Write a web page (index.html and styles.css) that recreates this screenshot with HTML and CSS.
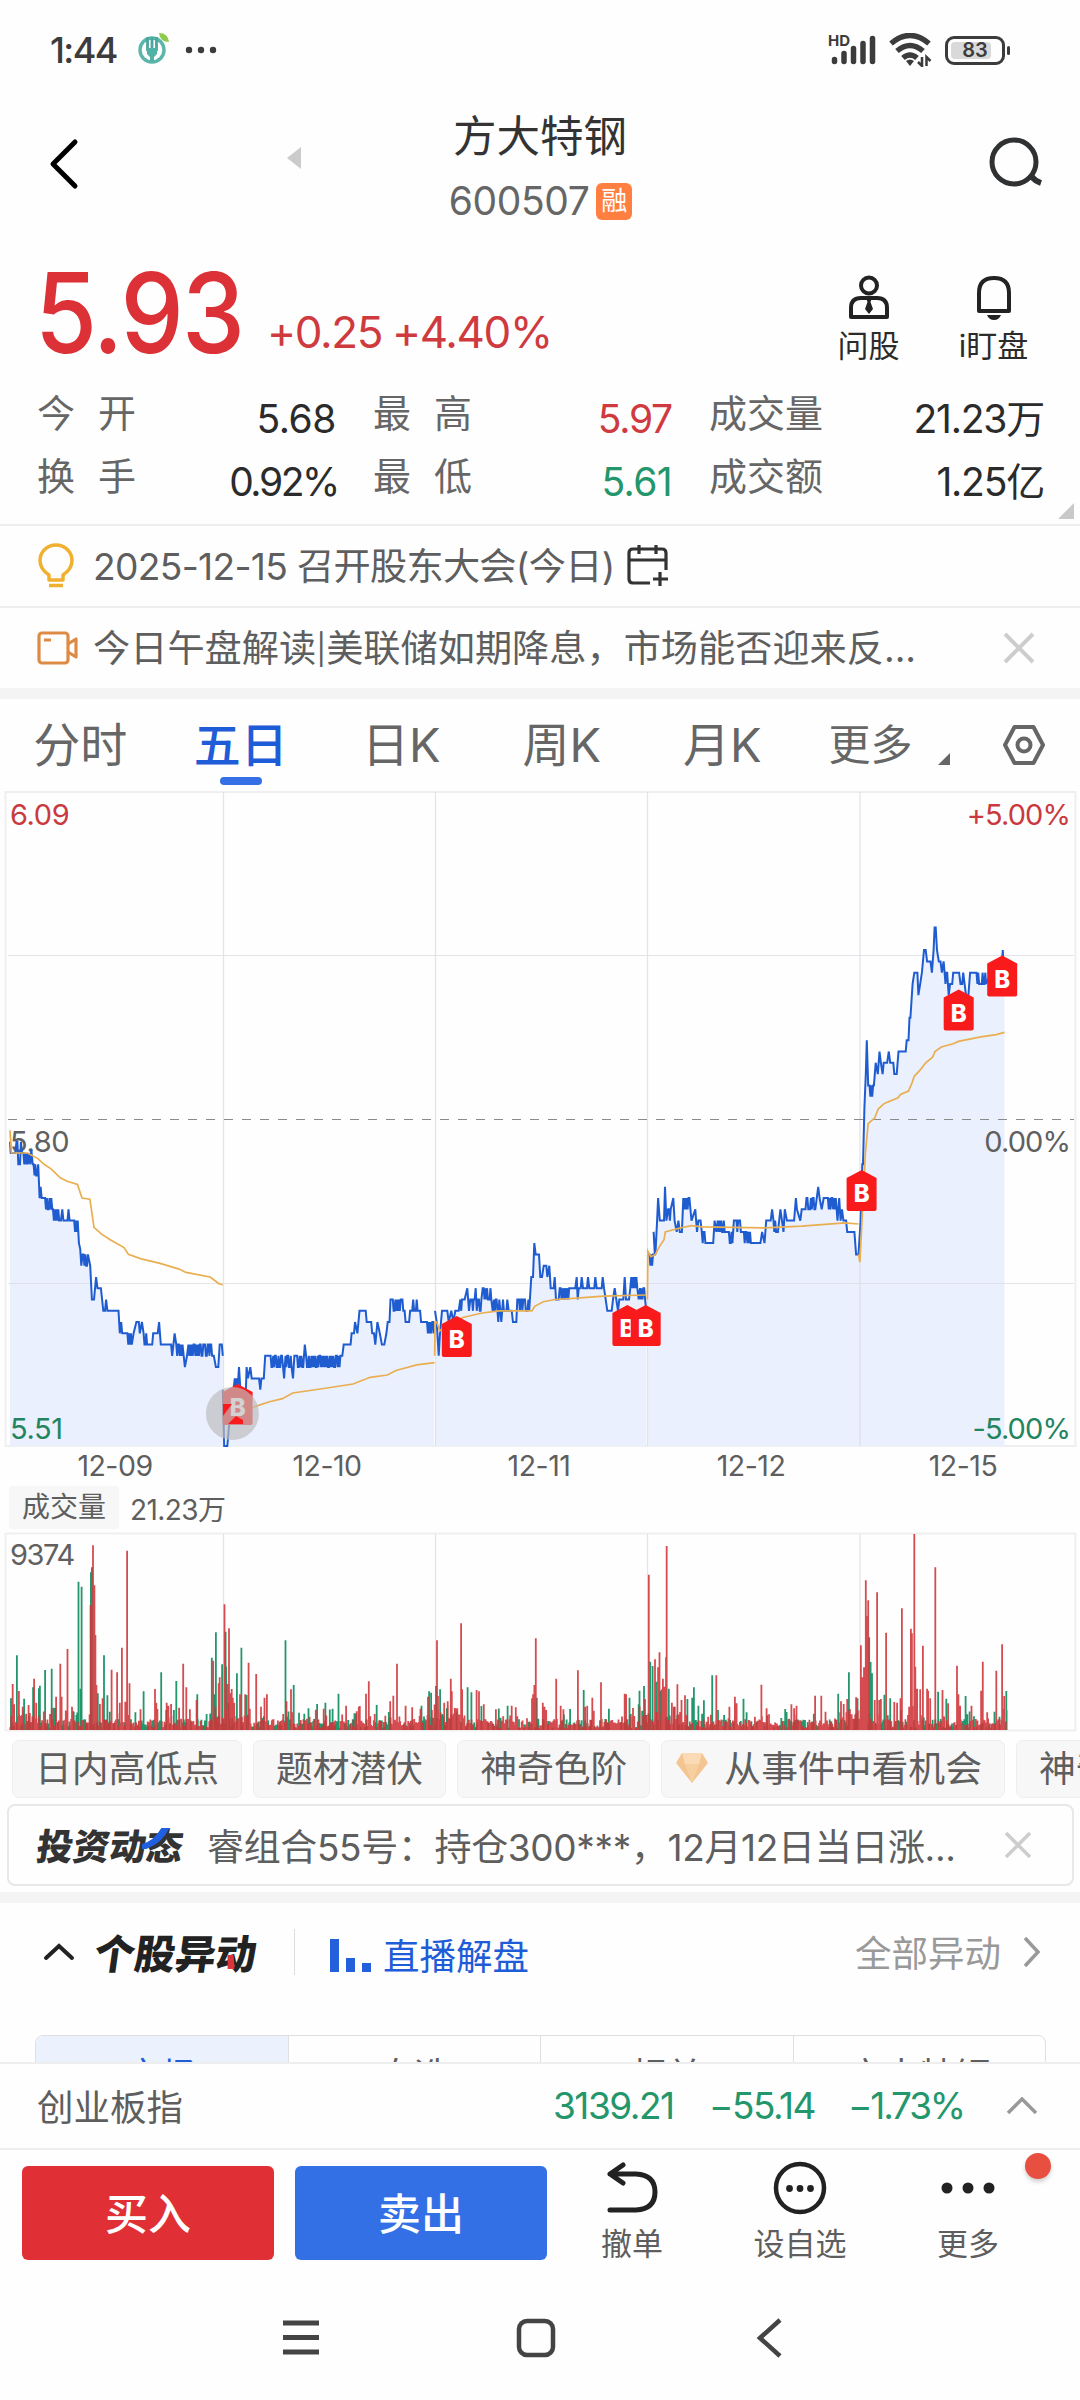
FILE: index.html
```html
<!DOCTYPE html>
<html lang="zh-CN">
<head>
<meta charset="UTF-8">
<meta name="viewport" content="width=device-width, initial-scale=1.0">
<title>方大特钢 600507</title>
<link rel="stylesheet" href="styles.css">
</head>
<body>

<!-- Status bar -->
<div class="status-bar">
    <span class="time">1:44</span>
    <svg class="app-icon" width="36" height="36" viewBox="0 0 36 36">
        <circle cx="17" cy="18" r="12" fill="none" stroke="#5bb5ab" stroke-width="3.4"/>
        <path d="M12.500 5v14M17 5v13M21.500 5v14" stroke="#4aa59c" stroke-width="2.800"/>
        <path d="M12 16h10v6l-3 3v5h-4v-5l-3-3z" fill="#4fb3a8"/>
        <path d="M24 1q9 0 10 9q-9 0-10-9z" fill="#8ecb4d"/>
    </svg>
    <svg width="32" height="8" viewBox="0 0 32 8" fill="#3c3c3c">
        <circle cx="4" cy="4" r="3.200"/><circle cx="16" cy="4" r="3.200"/><circle cx="28" cy="4" r="3.200"/>
    </svg>
    <div class="status-right">
        <span class="hd">HD</span>
        <svg width="46" height="30" viewBox="0 0 46 30" stroke="#3c3c3c" stroke-width="5.500" stroke-linecap="round">
            <path d="M3.500 26.500v-2M13 26.500v-8M22.500 26.500v-13M32 26.500v-18M41.500 26.500v-23"/>
        </svg>
        <svg width="44" height="34" viewBox="0 0 44 34" fill="none" stroke="#3c3c3c" stroke-width="5.500">
            <path d="M2 10.500q19-16 38 0M8 18q13-11 26 0M14 25q7-6 14 0"/>
            <path d="M17 28q4-3 8 0l-4 5z" fill="#3c3c3c" stroke="none"/>
            <path d="M33 24v9l-4-4M37.500 33v-9l4 4" stroke-width="2.500"/>
        </svg>
        <div class="battery"><i></i><span>83</span></div>
    </div>
</div>

<!-- Title bar -->
<header class="title-bar">
    <svg class="back" width="30" height="52" viewBox="0 0 30 52" fill="none" stroke="#000" stroke-width="5" stroke-linecap="round" stroke-linejoin="round">
        <path d="M26 4L4 26l22 22"/>
    </svg>
    <svg class="prev" width="14" height="22" viewBox="0 0 14 22"><path d="M14 0v22L0 11z" fill="#cbcbcb"/></svg>
    <div class="title">
        <h1>方大特钢</h1>
        <div class="code">600507<b>融</b></div>
    </div>
    <svg class="search" width="56" height="56" viewBox="0 0 56 56" fill="none" stroke="#2f3133" stroke-width="5">
        <circle cx="26" cy="26" r="22"/><path d="M43 40q4 5 10 7" stroke-width="6"/>
    </svg>
</header>

<!-- Quote -->
<section class="quote">
    <div class="price-row">
        <span class="price">5.93</span>
        <span class="change">+0.25 +4.40%</span>
        <div class="tool">
            <svg width="42" height="46" viewBox="0 0 42 46" fill="none" stroke="#222" stroke-width="4">
                <circle cx="21" cy="10.500" r="8"/>
                <path d="M3 42V33q0-10 10-10h16q10 0 10 10v9z" stroke-linejoin="round"/>
                <path d="M18 23h6l-1.500 4 2.500 7-4 5-4-5 2.500-7z" fill="#222" stroke="none"/>
            </svg>
            <span>问股</span>
        </div>
        <div class="tool">
            <svg width="42" height="46" viewBox="0 0 42 46" fill="none" stroke="#222" stroke-width="4">
                <path d="M6 36V18Q6 3 21 3t15 15v18z" stroke-linejoin="round"/>
                <path d="M14 40h14q-2 5-7 5t-7-5z" fill="#222" stroke="none"/>
            </svg>
            <span>i盯盘</span>
        </div>
    </div>
    <div class="stats">
        <div><label>今<i></i>开</label><span class="open">5.68</span></div>
        <div><label>最<i></i>高</label><span class="up">5.97</span></div>
        <div><label>成交量</label><span>21.23万</span></div>
        <div><label>换<i></i>手</label><span class="rate">0.92%</span></div>
        <div><label>最<i></i>低</label><span class="down">5.61</span></div>
        <div><label>成交额</label><span>1.25亿</span></div>
    </div>
    <svg class="expand" width="16" height="16" viewBox="0 0 16 16"><path d="M16 0v16H0z" fill="#c9c9c9"/></svg>
</section>

<!-- Notices -->
<div class="notice">
    <svg width="38" height="46" viewBox="0 0 38 46" fill="none" stroke="#efb12f" stroke-width="3.500">
        <path d="M12 37v-5Q3 26 3 17.500a16 15.500 0 0 1 32 0Q35 26 26 32v5z" stroke-linejoin="round"/>
        <path d="M12 42.500h14"/>
    </svg>
    <span class="notice-text date">2025-12-15 召开股东大会(今日)</span>
    <svg width="42" height="42" viewBox="0 0 42 42" fill="none" stroke="#333" stroke-width="3.200">
        <path d="M23 38H6q-4 0-4-4V8q0-4 4-4h29q4 0 4 4v17M2 15h37M12 0v9M29 0v9M33 27v14M26 34h15"/>
    </svg>
</div>
<div class="notice">
    <svg width="42" height="34" viewBox="0 0 42 34" fill="none" stroke="#dd8a45" stroke-width="3.200" stroke-linejoin="round">
        <rect x="2" y="2" width="29" height="30" rx="3"/><path d="M31 13l8-5v18l-8-5M7 9h7"/>
    </svg>
    <span class="notice-text">今日午盘解读<small>|</small>美联储如期降息，市场能否迎来反...</span>
    <svg class="close" width="32" height="32" viewBox="0 0 32 32" stroke="#cdcdcd" stroke-width="4"><path d="M2 2l28 28M30 2L2 30"/></svg>
</div>
<div class="divider"></div>

<!-- Period tabs -->
<nav class="tabs">
    <a>分时</a>
    <a class="active">五日</a>
    <a>日K</a>
    <a>周K</a>
    <a>月K</a>
    <a class="more">更多<svg width="12" height="12" viewBox="0 0 12 12"><path d="M12 0v12H0z" fill="#666"/></svg></a>
    <svg class="gear" width="44" height="42" viewBox="0 0 44 42" fill="none" stroke="#666" stroke-width="4">
        <path d="M12.500 3h19L41 21l-9.500 18h-19L3 21z" stroke-linejoin="round"/><circle cx="22" cy="21" r="6.500"/>
    </svg>
</nav>

<!-- Price chart, filled in by chart.js -->
<div class="chart">
    <svg id="price" width="1080" height="657" viewBox="0 791 1080 657">
        <rect class="frame" x="5.500" y="792" width="1070" height="654"/>
        <path class="area" id="area"/>
        <path class="grid" d="M223.500 792v654M435.500 792v654M647.500 792v654M860 792v654M8 955.500h1066M8 1283.500h1066"/>
        <path class="mid" d="M8 1119.500h1066"/>
        <g class="axis">
            <text x="10" y="825" class="up">6.09</text>
            <text x="10" y="1152">5.80</text>
            <text x="10" y="1439" class="down">5.51</text>
            <text x="1070" y="825" class="up end">+5.00%</text>
            <text x="1070" y="1152" class="end">0.00%</text>
            <text x="1070" y="1439" class="down end">-5.00%</text>
        </g>
        <path class="line" id="line"/>
        <path class="avg" id="avg"/>
        <g id="markers"></g>
        <circle cx="232.400" cy="1413.500" r="26.500" fill="#bdbdbd" fill-opacity=".68"/>
        <path d="M223 1404h9l-9 12zM228 1424l8-8 7 4v4z" fill="#f91b1b"/>
    </svg>
    <div class="dates"><span>12-09</span><span>12-10</span><span>12-11</span><span>12-12</span><span>12-15</span></div>
</div>

<!-- Volume -->
<div class="volume">
    <div class="volume-head"><b>成交量</b><span>21.23万</span></div>
    <svg id="volume" width="1080" height="200" viewBox="0 1532 1080 200">
        <rect class="frame" x="5.500" y="1533.500" width="1070" height="197"/>
        <path class="grid" d="M223.500 1534v196M435.500 1534v196M647.500 1534v196M860 1534v196"/>
        <g class="axis"><text x="10" y="1565" class="max">9374</text></g>
        <path id="green" fill="#23966b"/>
        <path id="red" fill="#cf3338" fill-opacity=".88"/>
    </svg>
</div>

<!-- Indicator chips -->
<div class="chips">
    <span>日内高低点</span>
    <span>题材潜伏</span>
    <span>神奇色阶</span>
    <span class="gem"><svg width="34" height="32" viewBox="0 0 34 32"><path d="M7 1h20l6 10-16 20L1 11z" fill="#f4c591"/><path d="M7 1h20l-3 11H10z" fill="#fadbb6"/><path d="M10 12h14l-7 19z" fill="#f7d0a2"/></svg>从事件中看机会</span>
    <span>神奇九转</span>
</div>

<!-- News card -->
<div class="news">
    <div class="brand">投资动态<svg width="26" height="22" viewBox="0 0 26 22"><path d="M17 0h8q-5 15-20 21H0v-5q11-3 17-16z" fill="#1f5fe0"/></svg></div>
    <span class="news-text">睿组合55号：持仓300***，12月12日当日涨...</span>
    <svg width="26" height="26" viewBox="0 0 26 26" stroke="#cdcdcd" stroke-width="3.500"><path d="M1 1l24 24M25 1L1 25"/></svg>
</div>
<div class="divider"></div>

<!-- Stock moves -->
<section class="moves">
    <div class="moves-head">
        <svg width="32" height="18" viewBox="0 0 32 18" fill="none" stroke="#222" stroke-width="4" stroke-linecap="round"><path d="M3 15L16 3l13 12"/></svg>
        <div class="brand big">个股异动<svg width="10" height="14" viewBox="0 0 10 14"><path d="M1 0h6l3 14H3z" fill="#db3439"/></svg></div>
        <i class="sep"></i>
        <svg class="bars" width="42" height="34" viewBox="0 0 42 34" fill="#2460dc"><path d="M0 0h9v33H0zM16 19h9v14h-9zM32 24h9v9h-9z"/></svg>
        <span class="live">直播解盘</span>
        <span class="all">全部异动</span>
        <svg width="18" height="32" viewBox="0 0 18 32" fill="none" stroke="#999" stroke-width="3.500"><path d="M2 2l13 14L2 30"/></svg>
    </div>
    <div class="segments"><span class="on">市场</span><span>自选</span><span>相关</span><span>方大特钢</span></div>
</section>

<!-- Index strip -->
<div class="index-bar">
    <span class="name">创业板指</span>
    <span class="n1">3139.21</span><span class="n2">−55.14</span><span class="n3">−1.73%</span>
    <svg width="32" height="18" viewBox="0 0 32 18" fill="none" stroke="#999" stroke-width="3.500"><path d="M2 16L16 2l14 14"/></svg>
</div>

<!-- Trade bar -->
<div class="trade-bar">
    <button class="buy">买入</button>
    <button class="sell">卖出</button>
    <div class="action">
        <svg width="54" height="54" viewBox="0 0 54 54" fill="none" stroke="#222" stroke-width="5" stroke-linecap="round" stroke-linejoin="round"><path d="M5 49h26q19-1 19-18T31 13H5M18 4L5 13l13 9"/></svg>
        <span>撤单</span>
    </div>
    <div class="action">
        <svg width="54" height="54" viewBox="0 0 54 54" fill="#222"><circle cx="27" cy="27" r="24" fill="none" stroke="#222" stroke-width="4.500"/><circle cx="16.500" cy="27.500" r="3.400"/><circle cx="27" cy="27.500" r="3.400"/><circle cx="37.500" cy="27.500" r="3.400"/></svg>
        <span>设自选</span>
    </div>
    <div class="action">
        <svg width="54" height="54" viewBox="0 0 54 54" fill="#222"><circle cx="6" cy="27" r="5.500"/><circle cx="27" cy="27" r="5.500"/><circle cx="48" cy="27" r="5.500"/></svg>
        <span>更多</span>
        <i class="dot"></i>
    </div>
</div>

<!-- System navigation -->
<div class="sys-nav">
    <svg width="38" height="40" viewBox="0 0 38 40" stroke="#444" stroke-width="5"><path d="M1 5h36M1 19.500h36M1 34h36"/></svg>
    <svg width="40" height="40" viewBox="0 0 40 40" fill="none" stroke="#444" stroke-width="4.500"><rect x="3" y="3" width="34" height="34" rx="8"/></svg>
    <svg width="26" height="40" viewBox="0 0 26 40" fill="none" stroke="#444" stroke-width="4.500"><path d="M24 2L4 20l20 18"/></svg>
</div>

<script src="chart.js"></script>
</body>
</html>
```
FILE: styles.css
```css
* {
    box-sizing: border-box;
}

body {
    margin: 0;
    width: 1080px;
    height: 2400px;
    overflow: hidden;
    background: #fefefe;
    color: #333;
    font-family: Inter, "Noto Sans CJK SC", sans-serif;
    font-size: 37px;
    letter-spacing: 0;
}

svg {
    display: block;
    flex: none;
}

.up { color: #cf3a3e; fill: #cf3a3e; }
.down { color: #23966b; fill: #23966b; }

/* status bar */
.status-bar {
    height: 100px;
    padding: 0 75px 0 50px;
    display: flex;
    align-items: center;
    color: #3c3c3c;
}

.time {
    font-size: 36px;
    font-weight: 500;
    letter-spacing: -1.6px;
    width: 85px;
}

.app-icon { margin-right: 14px; }

.status-right {
    margin-left: auto;
    display: flex;
    align-items: center;
}

.status-right > svg { margin-right: 12px; }

.hd {
    font-size: 15px;
    font-weight: 700;
    margin: -20px -19px 0 0;
    z-index: 1;
}

.battery {
    position: relative;
    width: 60px;
    height: 29px;
    border: 3px solid #3c3c3c;
    border-radius: 9px;
    font-size: 20px;
    font-weight: 600;
    line-height: 23px;
    text-align: center;
}

.battery i {
    position: absolute;
    left: 3px;
    top: 3px;
    width: 40px;
    height: 17px;
    border-radius: 4px;
    background: #d9d9d9;
}

.battery span { position: relative; }

.battery::after {
    content: "";
    position: absolute;
    right: -8px;
    top: 7px;
    width: 3px;
    height: 9px;
    border-radius: 2px;
    background: #3c3c3c;
}

/* title bar */
.title-bar {
    height: 140px;
    padding: 0 36px 0 49px;
    display: flex;
    align-items: flex-start;
}

.back { margin-top: 38px; }
.prev { margin: 47px 0 0 208px; }

.title {
    width: 240px;
    margin: 10px auto 0 119px;
    text-align: center;
}

h1 {
    margin: 0;
    font-size: 43.5px;
    font-weight: 400;
    line-height: 52px;
}

.code {
    display: flex;
    align-items: center;
    justify-content: center;
    margin-top: 13px;
    padding-left: 1px;
    font-size: 39px;
    line-height: 52px;
    color: #666;
    letter-spacing: -.4px;
}

.code b {
    width: 36px;
    height: 37px;
    margin-left: 7px;
    border-radius: 6px;
    background: #ff7f41;
    color: #fff;
    font-size: 26px;
    font-weight: 400;
    line-height: 36px;
    letter-spacing: 0;
}

.search { margin-top: 36px; }

/* quote */
.quote {
    position: relative;
    height: 286px;
    border-bottom: 2px solid #eeeeee;
}

.price-row {
    height: 147px;
    padding-left: 35px;
    display: flex;
}

.price {
    width: 232px;
    font-size: 111px;
    font-weight: 500;
    line-height: 146px;
    letter-spacing: -2px;
    color: #dc3237;
    transform: scaleX(.905);
    transform-origin: left;
}

.change {
    width: 531px;
    font-size: 44px;
    line-height: 184px;
    letter-spacing: -1.4px;
    word-spacing: -1px;
    color: #cf3a3e;
}

.tool {
    width: 125px;
    padding-top: 35px;
    display: flex;
    flex-direction: column;
    align-items: center;
    font-size: 31px;
    line-height: 50px;
    color: #2b2b2b;
}

.price-row .tool:nth-of-type(1) { margin-left: 8px; }

.stats {
    display: grid;
    grid-template-columns: 299px 299px 335px;
    column-gap: 37px;
    padding: 0 0 0 37px;
}

.stats div {
    height: 63px;
    display: flex;
    justify-content: space-between;
    color: #2b2b2b;
}

.stats label {
    color: #666;
    font-size: 38px;
    line-height: 52px;
}

.stats label i {
    display: inline-block;
    width: 23px;
}

.stats span {
    font-size: 39px;
    line-height: 63px;
    letter-spacing: -1.2px;
}

.stats .open { letter-spacing: -.4px; }
.stats .rate { letter-spacing: -2.4px; margin-right: -2px; }
.stats .up { color: #cf3a3e; }
.stats .down { color: #23966b; letter-spacing: -.6px; }

.expand {
    position: absolute;
    right: 6px;
    bottom: 5px;
}

/* notices */
.notice {
    height: 82px;
    padding: 0 45px 0 37px;
    display: flex;
    align-items: center;
    border-bottom: 2px solid #eeeeee;
    color: #5e5e5e;
}

.notice + .notice { border-bottom: 0; height: 80px; }

.notice-text {
    margin-left: 18px;
    margin-top: -4px;
    font-size: 37.2px;
    white-space: nowrap;
}

.notice-text small {
    font-size: 30px;
    vertical-align: 2px;
}

.notice + .notice .notice-text { margin-left: 14px; }
.date { letter-spacing: -.7px; margin-right: 12px; }
.close { margin-left: auto; }

.divider {
    height: 11px;
    background: #f4f4f4;
}

/* period tabs */
.tabs {
    height: 92px;
    display: flex;
    align-items: center;
    font-size: 47px;
    color: #666;
}

.tabs a {
    position: relative;
    width: 160.5px;
    text-align: center;
    line-height: 90px;
}

.tabs .active { color: #1f5cd8; font-weight: 500; }

.tabs .active::after {
    content: "";
    position: absolute;
    left: 59px;
    bottom: 5px;
    width: 42px;
    height: 8px;
    border-radius: 4px;
    background: #356fe6;
}

.tabs .more {
    display: flex;
    align-items: center;
    width: 174px;
    padding-left: 26px;
    font-size: 42px;
}

.more svg { margin: 28px 0 0 25px; }
.gear { margin-left: 25px; }

/* charts */
.frame { fill: none; stroke: #efefef; stroke-width: 2; }
.grid { fill: none; stroke: #dcdce4; stroke-width: 1.200; opacity: .8; }
.mid { fill: none; stroke: #8a8a8a; stroke-width: 1; stroke-dasharray: 9 9; }
.area { fill: #eaf0fe; }
.line { fill: none; stroke: #1f5cd0; stroke-width: 2; }
.avg { fill: none; stroke: #e9ae50; stroke-width: 1.700; }
.axis text { font-size: 29px; fill: #606060; letter-spacing: -.4px; }
.axis .up { fill: #c93a40; }
.axis .down { fill: #23855f; }
.axis .end { text-anchor: end; letter-spacing: -.9px; }
.axis .max { letter-spacing: -1.4px; }
.flag path { fill: #f91b1b; }
.flag text { fill: #fff; font-size: 24px; font-weight: 800; text-anchor: middle; }

.dates {
    display: flex;
    height: 36px;
    padding-left: 9px;
    font-size: 28.5px;
    line-height: 35px;
    letter-spacing: -.5px;
    color: #5e5e5e;
}

.dates span {
    width: 212px;
    text-align: center;
}

.volume-head {
    height: 48px;
    display: flex;
    align-items: center;
    padding: 0 0 1px 9px;
    font-size: 28px;
    color: #5e5e5e;
}

.volume-head b {
    width: 110px;
    height: 43px;
    margin-right: 11px;
    border-radius: 4px;
    background: #f7f7f7;
    font-weight: 400;
    line-height: 43px;
    text-align: center;
}

.volume-head span { letter-spacing: -.6px; }

/* chips */
.chips {
    display: flex;
    gap: 11px;
    margin-top: 8px;
    padding-left: 12px;
    height: 58px;
    overflow: hidden;
}

.chips span {
    flex: none;
    display: flex;
    align-items: center;
    padding: 0 22px;
    border: 1px solid #eeeeee;
    border-radius: 7px;
    background: #f7f7f7;
    font-size: 36.8px;
    line-height: 54px;
    color: #5e5e5e;
}

.chips .gem { padding-left: 13px; }
.gem svg { margin: -3px 15px 0 0; }

/* news card */
.news {
    height: 82px;
    margin: 6px 6px 6px 7px;
    padding: 0 41px 0 28px;
    display: flex;
    align-items: center;
    border: 2px solid #e8e8e8;
    border-radius: 8px;
    color: #5e5e5e;
}

.news-text {
    margin-left: 24px;
    font-size: 37px;
    letter-spacing: -.35px;
    white-space: nowrap;
}

.news > svg { margin-left: auto; }

.brand {
    position: relative;
    font-family: "Noto Sans CJK SC", sans-serif;
    font-size: 36.5px;
    font-weight: 900;
    line-height: 50px;
    color: #333;
    transform: skewX(-8deg);
    white-space: nowrap;
}

.brand svg {
    position: absolute;
    right: 15px;
    top: 8px;
}

/* stock moves */
.moves {
    height: 159px;
    overflow: hidden;
}

.moves-head {
    height: 132px;
    display: flex;
    align-items: center;
    padding: 0 39px 35px 43px;
}

.brand.big {
    margin-left: 20px;
    font-size: 40.5px;
    color: #222;
}

.brand.big svg { right: 20px; top: 28px; }

.sep {
    width: 1px;
    height: 46px;
    margin: 0 35px 0 37px;
    background: #dddddd;
}

.bars { margin-top: 9px; }

.live {
    margin: 6px 0 0 11px;
    font-size: 36.5px;
    color: #1f5cd8;
}

.all {
    margin: 0 22px 0 auto;
    font-size: 36.5px;
    color: #999;
}

.segments {
    display: flex;
    height: 82px;
    margin: 0 34px 0 35px;
    border: 1px solid #dfdfdf;
    border-radius: 8px;
    overflow: hidden;
    font-size: 36px;
    line-height: 80px;
    color: #5e5e5e;
}

.segments span {
    flex: 1 1 0;
    text-align: center;
    border-left: 1px solid #dfdfdf;
}

.segments .on {
    border-left: 0;
    background: #ebf1fd;
    color: #1f5cd8;
}

/* index strip */
.index-bar {
    height: 88px;
    padding: 0 42px 1px 37px;
    display: flex;
    align-items: center;
    border-top: 2px solid #eeeeee;
    border-bottom: 2px solid #eeeeee;
    background: #fefefe;
    letter-spacing: -1.5px;
    color: #23966b;
}

.index-bar .name {
    width: 516px;
    font-size: 36.5px;
    letter-spacing: 0;
    color: #5e5e5e;
}

.n1 { width: 156px; }
.n2 { width: 139px; }
.n3 { letter-spacing: -2.2px; }
.index-bar svg { margin-left: auto; }

/* trade bar */
.trade-bar {
    display: flex;
    height: 140px;
    padding-left: 22px;
}

.trade-bar button {
    width: 252px;
    height: 94px;
    margin: 16px 21px 0 0;
    padding: 0 0 4px;
    border: 0;
    border-radius: 6px;
    background: #e03036;
    color: #fff;
    font-family: inherit;
    font-size: 43px;
    font-weight: 500;
}

.trade-bar .sell { background: #3370e6; }

.action {
    position: relative;
    width: 168px;
    padding-top: 11px;
    display: flex;
    flex-direction: column;
    align-items: center;
    font-size: 31px;
    line-height: 46px;
    color: #5e5e5e;
}

.action:nth-of-type(1) { margin-left: -20px; }
.action span { margin-top: 6px; }

.dot {
    position: absolute;
    left: 141px;
    top: 3px;
    width: 26px;
    height: 26px;
    border-radius: 50%;
    background: #e74f40;
    box-shadow: 0 3px 4px rgba(0, 0, 0, .18);
}

/* system navigation */
.sys-nav {
    display: flex;
    align-items: center;
    gap: 196px;
    padding: 0 0 2px 282px;
    height: 98px;
}

.sys-nav svg:last-child { margin-left: 4px; }
```
FILE: chart.js
```js
// levels are ticks of 0.01 above 5.51; [x, level] is a point,
// [from, to, low, high] is a stretch where the price flips between two levels
const days = [
    { x0: 0, k: 2.904, pts: [
        [29,27],[31,26],[44,26],[48,61,25,27],[64,26],[68,84,25,26],[88,25],[91,26.3],[95,108,24,25],[111,25],[115,22],[118,23],[121,22],[129,22],[131,149,21,22],
        [152,21],[154,178,20,21],[181,21],[184,20],[196,20],[199,21],[202,20],[211,20],[213,226,19,20],[229,18],[233,17.5],[236,16],[240,256,16,17],[262,16],[267,13],[273,13],[279,15],[283,14],
        [293,14],[300,12],[305,12],[308,13],[312,12],[344,12],[348,10],[352,11],[355,10],[366,10],[370,384,9,10],[388,10],[396,11],[403,11],[406,10],[412,11],[417,428,9,10],
        [431,9],[442,9],[445,10],[458,10],[462,11],[467,9],[497,9],[500,8],[507,10],[512,532,8,9],[537,7],[543,8],[547,618,8,9],[621,8],[627,7],[634,7],[638,9],[644,9],[647,8]] },
    { x0: 0, k: 2.904, pts: [
        [647,5],[651,0],[660,0],[665,1.8],[672,3],[678,5],[682,690,5,6],[694,7],[698,5],[714,5],[716,7],[720,6],[727,7],[731,6],[752,6],[756,5],[759,6],[766,6],[770,8],
        [773,820,7,8],[825,6],[829,847,7,8],[851,6],[855,882,7,8],[885,9],[889,990,7,8],[994,8],[998,9],[1018,9],[1021,10],[1028,10],[1031,11],[1038,10],[1044,12],[1062,12],[1065,11],[1078,11],[1081,10],
        [1086,10],[1090,9],[1096,11],[1103,10],[1109,9],[1116,9],[1122,10],[1126,11],[1131,11],[1134,13],[1138,1172,12,13],[1175,12],[1178,11],[1188,11],[1191,12],[1197,12],[1200,1213,12,13],[1220,12],[1223,11],[1237,11],[1240,1262,10,11]] },
    { x0: 430, k: 3, pts: [
        [15,12],[20,11],[26,8],[30,10],[36,12],[52,12],[56,11],[64,12],[70,11],[76,12],[86,12],[91,106,12,13],[112,14],[117,12],[121,134,12,13],[137,14],[140,12],[144,155,12,13],[158,14],[161,184,13,14],
        [188,12],[192,200,12,13],[205,11],[208,13],[214,11],[219,232,12,13],[236,12],[245,12],[249,11],[259,11],[262,13],[267,300,12,13],[304,15],[309,15],[313,18],[317,17],[327,17],[331,15],[336,15],[341,16],[349,16],[352,15],
        [358,16],[362,14],[371,14],[374,15],[378,13],[386,13],[389,14],[392,418,13,14],[422,14],[436,14],[440,15],[443,13],[446,14],[452,14],[455,15],[459,14],[471,14],[474,15],[478,14],[493,14],[496,15],[500,14],[515,14],[518,15],
        [522,14],[527,13],[532,12],[545,12],[549,13],[554,14],[559,13],[564,12],[568,13],[580,13],[584,15],[588,13],[597,13],[601,14],[604,622,14,15],[626,13],[630,646,13,14],[649,12]] },
    { x0: 540, k: 2.904, pts: [
        [313,17],[318,334,16,17],[330,19],[335,17],[340,20],[343,22],[348,20],[360,20],[363,23],[367,20],[372,382,20,21],[387,22],[391,20],[397,19],[402,20],[406,19],[412,19],[416,436,21,22],
        [440,20],[451,21],[456,19],[460,20],[466,20],[470,482,18,19],[486,18],[503,18],[507,20],[512,19],[516,538,19,20],[542,19],[546,560,18,19],[563,20],[568,586,19,20],[592,614,18,19],[622,18],[640,18],[645,19],[652,18],[657,20],[670,20],[674,21],[678,692,19,20],
        [698,21],[707,19],[711,21],[717,20],[738,20],[743,22],[746,21],[756,20],[760,21],[771,21],[774,802,21,22],[808,23],[812,22],[818,21],[824,22],[832,22],[836,860,21,22],[864,20],[869,22],[873,20],[877,21],[881,20],[889,20],[892,19],[913,19],[918,17],[925,17],[927,18]] },
    { x0: 540, k: 2.904, pts: [
        [927,18],[931,20],[936,25],[938,25],[942,30],[946,33],[949,36],[953,32],[957,972,31,32],[975,34],[981,33],[986,35],[990,34],[995,33],[998,34],[1008,34],[1013,35],[1017,34],[1026,34],[1029,33],[1036,33],[1041,35],[1062,35],[1065,36],[1070,36],[1073,1078,37,38],
        [1082,41],[1087,42],[1096,42],[1099,40],[1104,41],[1109,42],[1115,44],[1120,44],[1124,43],[1134,43],[1138,42],[1143,44],[1146,46],[1149,46],[1153,44],[1158,43],[1163,43],[1167,42],[1172,43],[1175,1183,41,42],[1187,40],[1191,41],[1197,41],[1200,42],[1217,42],[1221,41],[1226,41],[1229,42],[1233,41],[1237,40],
        [1244,40],[1249,42],[1262,42],[1265,1296,41,42],[1310,42],[1330,41],[1340,42],[1344,44],[1347,42],[1349,41]] }
];

const averages = [
    [[29,28],[33,26],[80,26],[110,25.5],[128,25],[148,24.6],[175,23.8],[195,23.5],[225,23.2],[238,22],[261,21.9],[273,19.4],[295,18.8],[320,18.3],[360,17.6],[373,17],[410,16.6],[465,16.2],[520,15.7],[540,15.4],[610,15],[636,14.4],[647,14.3]],
    [[662,2.2],[740,3.5],[780,3.9],[820,4.2],[850,4.7],[940,5.1],[1025,5.5],[1075,6.1],[1125,6.3],[1150,6.7],[1210,7.2],[1262,7.4]],
    [[14,8],[15,11],[20,11],[29,10.2],[53,10.9],[99,11.4],[156,11.8],[208,12],[306,12],[314,12.4],[340,12.8],[375,13],[430,13.1],[520,13.3],[648,13.4]],
    [[312,13],[313,17.3],[322,16.8],[335,17],[345,17.6],[360,18.3],[364,19],[400,19.3],[440,19.55],[470,19.45],[650,19.35],[760,19.5],[885,19.8],[925,19.7]],
    [[925,17],[929,16.3],[935,20],[945,26],[953,28.6],[972,29.1],[982,29.9],[1000,30.4],[1040,30.9],[1047,31.2],[1070,31.5],[1080,32.2],[1087,32.8],[1105,33.4],[1120,34],[1140,34.5],[1147,35],[1165,35.4],[1200,35.7],[1215,35.9],[1280,36.3],[1325,36.5],[1349,36.7]]
];

let seed = 7;
function rand() {
    seed = (seed * 16807) % 2147483647;
    return seed / 2147483647;
}

const yOf = level => (1446 - level * 11.27).toFixed(1);

function toPoints(day) {
    const out = [];
    day.pts.forEach(p => {
        if (p.length === 2) {
            out.push(p);
            return;
        }
        // one minute is about 2.55 units wide
        let high = true;
        for (let x = p[0]; x <= p[1]; x += 2.55) {
            out.push([x, high ? p[3] : p[2]]);
            if (rand() > .3) high = !high;
        }
    });
    return out.map(p => (day.x0 + p[0] / day.k).toFixed(1) + ' ' + yOf(p[1]));
}

let line = '', area = '', avg = '';
days.forEach((day, i) => {
    const pts = toPoints(day);
    line += 'M' + pts.join('L');
    area += 'M' + pts[0].split(' ')[0] + ' 1446L' + pts.join('L') + 'V1446z';
    avg += 'M' + averages[i].map(p => (day.x0 + p[0] / day.k).toFixed(1) + ' ' + yOf(p[1])).join('L');
});
document.getElementById('line').setAttribute('d', line);
document.getElementById('area').setAttribute('d', area);
document.getElementById('avg').setAttribute('d', avg);

// buy flags: centre x, top y
document.getElementById('markers').innerHTML = [[237.6, 1384], [456.8, 1316], [627.4, 1305], [645.7, 1305], [861.6, 1170], [958.7, 989.5], [1002.2, 955.5]].map(m =>
    `<g class="flag" transform="translate(${m[0]} ${m[1]})"><path d="M0 0L15 8V39q0 2-2 2H-13q-2 0-2-2V8z"/><text y="32">B</text></g>`).join('');

// volume spikes: x, top, g for falling minutes
const left = '32,655g 37,612 41,673 49,526g 55,633 66,680 70,656g 83,675 96,622g 99,596 105,668 113,625g 116,617g 131,570g 150,566g 156,683g 160,684g 163,650 175,551 179,650 196,507 209,680 214,695g 228,305g 234,626g 237,320g 263,375 264,277g 267,262g 270,196 274,316 277,465 280,615 284,640g 290,672 298,655 302,526g 312,646g 324,569 340,577 348,668 354,503 364,665 369,212 376,610 408,688 417,634g 450,627 454,668 468,577g 484,668 489,677 497,672 505,690g 512,603g 520,683 532,551 541,622 571,660 573,643g 615,533g 619,542 623,643g 627,457g 635,610 638,592 645,553g 652,373 655,455g 657,560g 660,612 665,445 669,640 673,627 676,653 680,668 688,580g 697,643 701,503g 712,643 716,645g 722,548 744,582 758,680 768,653 775,643 829,481g 832,664 845,628 853,615g 896,685g 921,672g 940,686 945,668g 966,686g 983,641g 1005,677 1036,694 1042,680 1045,678 1063,641 1071,604 1094,675g 1133,664 1142,647 1153,551 1178,677 1197,682 1221,686 1224,677g 1243,650 1246,634g 1252,638g 1266,618g 1269,481 1272,648 1278,628g 1290,668 1300,664 1309,596 1312,634 1328,685 1339,430 1342,628 1358,622g 1369,637g 1384,630 1391,634 1398,678g 1405,673 1440,688 1486,677 1498,682 1545,655 1548,643 1552,615 1556,475 1559,653g';
const right = '8,668 13,680 18,690 47,596 60,677 68,688 110,571 127,630g 131,680 137,677 152,653 177,607 200,686g 246,641 250,643 260,653g 270,684 289,632g 302,618g 305,657 316,284 320,545g 327,558g 334,538 338,605g 343,562 347,517 350,632g 354,628 357,596 361,620 366,532 368,198 374,626g 383,668 399,613 411,660 421,646 428,657g 442,653g 447,622g 460,677g 476,661g 500,586g 512,586 517,690g 550,680 566,650 571,670 591,656g 600,697g 643,614 658,685 712,687g 730,673 738,685 745,677 799,647 817,647 829,695 866,641g 874,664 882,672 892,657 897,577g 918,652 922,655g 932,496 937,592 941,562 946,301 949,408 951,430 953,361 956,472g 960,546g 964,580g 972,660 979,337 985,660 990,657 1000,644g 1005,458 1017,655g 1029,666 1037,668 1047,655 1051,385 1072,680 1077,446 1080,460 1087,162 1090,560 1095,626 1104,628 1112,497 1124,626 1127,632 1133,655 1148,262 1156,635g 1169,630 1180,656g 1185,670 1211,557 1215,643 1220,677 1236,648g 1241,703g 1253,677 1281,632 1286,545 1320,695g 1325,572 1342,493 1348,648 1354,633g';

const bars = { g: '', r: '' };
function bar(x, h, color) {
    bars[color] += `M${x.toFixed(1)} 1730h1.800v${-h.toFixed(1)}h-1.800z`;
}

for (let x = 9.5; x < 1006; x += .88) {
    const day = (x - 9) % 212;
    const base = day < 30 || day > 196 ? 15 : 9;
    const tall = rand() > .82 ? 14 : 0;
    const h = 2 + rand() * base + rand() * tall;
    bar(x, h, rand() > .68 ? 'g' : 'r');
}
[[left, 0], [right, 540]].forEach(([list, x0]) => {
    list.split(' ').forEach(item => {
        const [x, top] = item.split(',').map(parseFloat);
        bar(x0 + x / 2.904 - .9, (750 - top) / 3, item.endsWith('g') ? 'g' : 'r');
    });
});
document.getElementById('green').setAttribute('d', bars.g);
document.getElementById('red').setAttribute('d', bars.r);
```
